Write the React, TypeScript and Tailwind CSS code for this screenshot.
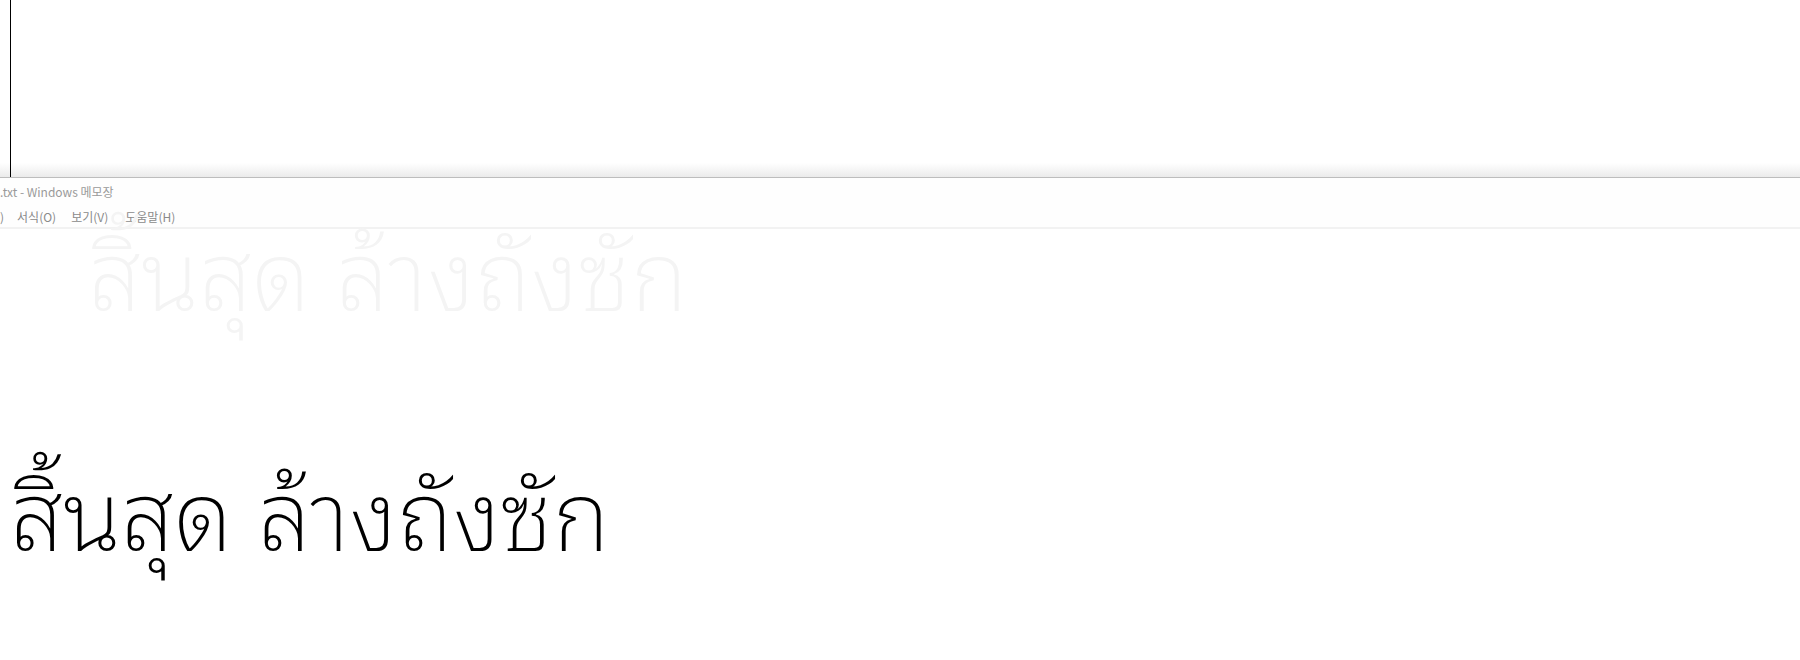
const thai = '"Noto Sans Thai Looped", "Noto Sans Thai", sans-serif';

const App = () => {
  return (
    <div className="w-[1800px] h-[660px] bg-white overflow-hidden flex flex-col">
      {/* top window, cursor line */}
      <div className="h-[163px] flex">
        <div className="ml-[10px] w-px bg-black h-full" />
      </div>
      <div className="h-[14px] flex bg-gradient-to-b from-white to-[#ebebeb]">
        <div className="ml-[10px] w-px bg-black h-full" />
      </div>
      <div className="h-px bg-[#bdbdbd]" />

      {/* notepad title + menu */}
      <div
        className="h-[49px] flex flex-col bg-[#fefefe] text-[12px] leading-none"
        style={{ fontFamily: '"Noto Sans CJK KR", "Noto Sans", sans-serif' }}
      >
        <div className="mt-[8px] text-[#9a9a9a]">.txt - Windows 메모장</div>
        <div className="mt-[13px] flex text-[#8a8a8a]">
          <span>)</span>
          <span className="ml-[13px]">서식(O)</span>
          <span className="ml-[15px]">보기(V)</span>
          <span className="ml-[17px]">도움말(H)</span>
        </div>
      </div>
      <div className="h-[2px] bg-[#f2f2f2]" />

      {/* faded text */}
      <div
        className="ml-[88px] h-[150px] text-[97px] font-extralight leading-none text-[#f4f4f4] whitespace-nowrap"
        style={{ fontFamily: thai }}
      >
        <div className="mt-[-10px]">สิ้นสุด ล้างถังซัก</div>
      </div>

      {/* main text */}
      <div
        className="ml-[10px] mt-[80px] text-[97px] font-extralight leading-none text-black whitespace-nowrap"
        style={{ fontFamily: thai }}
      >
        สิ้นสุด ล้างถังซัก
      </div>
    </div>
  );
};

export default App;
